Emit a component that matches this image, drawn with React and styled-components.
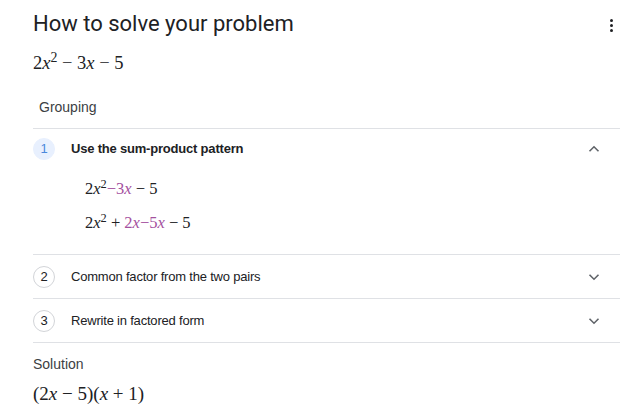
import React from "react";
import styled, { createGlobalStyle } from "styled-components";

const Global = createGlobalStyle`
  html, body { margin: 0; padding: 0; background: #fff; }
  body { font-family: "Liberation Sans", Arial, sans-serif; color: #202124; }
`;

const Page = styled.div`
  padding: 10px 18px 0 33px;
`;

const Header = styled.div`
  display: flex;
  align-items: center;
  justify-content: space-between;
`;

const Title = styled.h1`
  margin: 0;
  font-family: Roboto, "Open Sans", sans-serif;
  font-weight: 400;
  font-size: 22px;
  line-height: 28px;
  color: #202124;
`;

const Kebab = styled.button`
  width: 18px;
  height: 20px;
  padding: 0;
  border: 0;
  background: none;
  display: flex;
  flex-direction: column;
  align-items: center;
  justify-content: center;
  gap: 2px;
  margin-top: 2px;
  span {
    width: 3px;
    height: 3px;
    border-radius: 50%;
    background: #202124;
  }
`;

const Math = styled.div`
  font-family: "Liberation Serif", "Times New Roman", serif;
  font-size: ${(p) => p.$size || 18.5}px;
  line-height: ${(p) => p.$lh || 24}px;
  color: #202124;
  margin-top: ${(p) => p.$mt || 0}px;
  white-space: nowrap;
  i { font-style: italic; }
  sup {
    font-size: 0.75em;
    line-height: 0;
    vertical-align: 0.5em;
  }
`;

const Purple = styled.span`
  color: #a4509e;
`;

const Label = styled.div`
  font-size: 14px;
  line-height: 20px;
  color: #3c4043;
  margin-top: ${(p) => p.$mt}px;
  padding-left: ${(p) => p.$indent || 0}px;
`;

const Steps = styled.div`
  margin-top: 11px;
  border-bottom: 1px solid #dfe1e5;
`;

const Step = styled.div`
  border-top: 1px solid #dfe1e5;
`;

const StepHeader = styled.div`
  display: flex;
  align-items: center;
  height: ${(p) => (p.$open ? 39 : 43)}px;
`;

const Num = styled.div`
  width: 22px;
  height: 22px;
  box-sizing: border-box;
  border-radius: 50%;
  display: flex;
  align-items: center;
  justify-content: center;
  font-size: 13px;
  flex: none;
  background: ${(p) => (p.$active ? "#e8f0fe" : "#fff")};
  color: ${(p) => (p.$active ? "#4a89dc" : "#202124")};
  border: 1px solid ${(p) => (p.$active ? "#e8f0fe" : "#d2d4d8")};
`;

const StepTitle = styled.div`
  flex: 1;
  margin-left: 16px;
  font-size: 13px;
  letter-spacing: -0.2px;
  font-weight: ${(p) => (p.$open ? 700 : 400)};
  color: #202124;
`;

const Chevron = styled.svg`
  width: 12px;
  height: 12px;
  margin-right: 20px;
  flex: none;
`;

const StepBody = styled.div`
  padding: 4px 0 14px 52px;
`;

const ChevronIcon = ({ up }) => (
  <Chevron viewBox="0 0 12 12">
    <path
      d={up ? "M1.5 8.2 L6 3.8 L10.5 8.2" : "M1.5 3.8 L6 8.2 L10.5 3.8"}
      fill="none"
      stroke="#5f6368"
      strokeWidth="1.6"
    />
  </Chevron>
);

const steps = [
  { n: 1, title: "Use the sum-product pattern", open: true },
  { n: 2, title: "Common factor from the two pairs" },
  { n: 3, title: "Rewrite in factored form" },
];

export default function App() {
  return (
    <Page>
      <Global />
      <Header>
        <Title>How to solve your problem</Title>
        <Kebab aria-label="More">
          <span />
          <span />
          <span />
        </Kebab>
      </Header>
      <Math $mt={13}>
        2<i>x</i>
        <sup>2</sup> − 3<i>x</i> − 5
      </Math>
      <Label $mt={22} $indent={6}>Grouping</Label>
      <Steps>
        {steps.map((s) => (
          <Step key={s.n}>
            <StepHeader $open={s.open}>
              <Num $active={s.open}>{s.n}</Num>
              <StepTitle $open={s.open}>{s.title}</StepTitle>
              <ChevronIcon up={s.open} />
            </StepHeader>
            {s.open && (
              <StepBody>
                <Math $size={16.5} $lh={34}>
                  2<i>x</i>
                  <sup>2</sup>
                  <Purple>
                    −3<i>x</i>
                  </Purple>{" "}
                  − 5
                </Math>
                <Math $size={16.5} $lh={34}>
                  2<i>x</i>
                  <sup>2</sup> +{" "}
                  <Purple>
                    2<i>x</i>−5<i>x</i>
                  </Purple>{" "}
                  − 5
                </Math>
              </StepBody>
            )}
          </Step>
        ))}
      </Steps>
      <Label $mt={11}>Solution</Label>
      <Math $size={19} $lh={26} $mt={7}>
        (2<i>x</i> − 5)(<i>x</i> + 1)
      </Math>
    </Page>
  );
}
